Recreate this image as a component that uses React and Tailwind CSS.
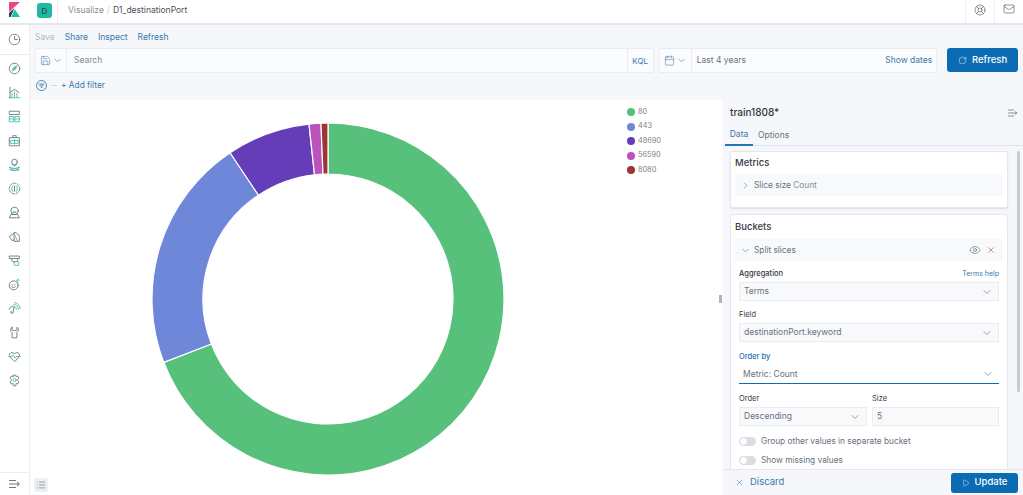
import React from "react";
import { ChevronDown, ChevronRight, X, Eye, Play, RotateCw, Calendar, Save, Mail, LifeBuoy, List } from "lucide-react";

const G = "#6f7682";
const T = "#4dbdad";
const Ico = ({ children }) => (
  <svg width="13" height="13" viewBox="0 0 16 16" fill="none" stroke={G} strokeWidth="1.1" strokeLinecap="round" strokeLinejoin="round">{children}</svg>
);
const icons = [
  <Ico><circle cx="8" cy="8" r="6.5" /><path d="M8 4v4h3.500" /></Ico>,
  <Ico><circle cx="8" cy="8" r="6.500" /><path d="M11 5 9 9 5 11 7 7z" stroke={T} fill={T} /></Ico>,
  <Ico><path d="M1.500 14.500h13" stroke={T} /><path d="M2.500 1.500v13" /><path d="M2.500 8 8 4l5.500 4" /><path d="M5 14V9M8 14V7M11 14V9" stroke={T} /></Ico>,
  <Ico><rect x="2" y="1.500" width="12" height="4" /><path d="M2 8h5v6.500H2zM9 8h5v6.500H9zM2 11h5M9 11h5" stroke={T} /></Ico>,
  <Ico><path d="M2 4.500h12v10H2zM6 4.500V2h4v2.500" /><path d="M3.500 8h9v3.500h-9z" stroke={T} /><path d="M8 7v5.500" stroke={T} /></Ico>,
  <Ico><circle cx="8" cy="5" r="3.500" /><path d="M8 10 5.500 7.500M8 10l2.500-2.500" /><path d="M2 11.500c3 2 9 2 12 0M2.500 14c3 1.500 8 1.500 11 0" stroke={T} strokeWidth="1.500" /></Ico>,
  <Ico><circle cx="8" cy="8" r="6.500" strokeDasharray="3 1.800" /><path d="M6 4.500c-2 2-2 5 0 7M10 4.500c2 2 2 5 0 7" stroke={T} /><path d="M8 5v6" /></Ico>,
  <Ico><circle cx="8" cy="6" r="4.500" /><path d="M2 14.500h12l-2-4H4z" /><path d="M6 7.500a2.500 2.500 0 0 1 4 0z" stroke={T} /></Ico>,
  <Ico><path d="M8 3a6.500 6.500 0 0 1 6 6.500V14H8z" /><path d="M7.500 4 1.500 8 5 13l3-1" /><path d="M8 6l4 8" stroke={T} /></Ico>,
  <Ico><path d="M2 2.500h12v3H2zM4 5.500l1.500 4H12V5.500" /><path d="M7 9.500 8 14h5l.5-4" stroke={T} /></Ico>,
  <Ico><circle cx="7" cy="9" r="5.500" /><path d="M5 8v.5M8.500 8v.5M4.500 11c1 .8 3.500 .8 4.500 0" /><path d="M12 6V1.500M10.500 3 12 1.500 13.500 3" stroke={T} /></Ico>,
  <Ico><path d="M1.500 9a4 4 0 0 1 6-3L6 14l-3-1 1-2" /><path d="M7 3a6 6 0 0 1 6 6M8 .8A8 8 0 0 1 15 8M7 5.500a3.500 3.500 0 0 1 3.500 3.500" stroke={T} /></Ico>,
  <Ico><path d="M5 1.500v3.500l3 1 3-1V1.500c2 1 2.500 4 1 5.500l-1 1v6.500H5V8L4 7C2.500 5.500 3 2.500 5 1.500z" /></Ico>,
  <Ico><path d="M8 14 2.500 8.500C0 5.500 3.500 1 8 4.500 12.500 1 16 5.500 13.500 8.500z" /><path d="M1 8h4l1.500-2 2 4L10 8h5" stroke={T} /></Ico>,
  <Ico><path d="M6.500 1.500h3l.5 2 2-.8 1.500 2.500-1.500 1.500v1.600l1.500 1.500L12 12.300l-2-.8-.5 3h-3l-.5-3-2 .8-1.500-2.500L4 8.300V6.700L2.500 5.200 4 2.700l2 .8z" /><circle cx="8" cy="7.500" r="2" stroke={T} /></Ico>,
];

const Link = ({ children, className = "" }) => <span className={"text-[#3a78ad] " + className}>{children}</span>;

const Select = ({ value, className = "", focus }) => (
  <div className={"h-[19px] flex items-center justify-between pl-[4px] pr-[5px] text-[8.500px] text-[#69707d] " + (focus ? "bg-white border-b border-[#0f6cb0] " : "bg-[#f8f9fb] border border-[#e9edf3] ") + className}>
    <span>{value}</span>
    <ChevronDown size={12} strokeWidth={1.2} color="#5a6270" />
  </div>
);

const Label = ({ children, className = "" }) => <div className={"text-[7.500px] font-medium h-[12px] leading-[12px] text-[#343741] " + className}>{children}</div>;

const Toggle = ({ label, className = "" }) => (
  <div className={"flex items-center gap-[5px] h-[12px] " + className}>
    <div className="w-[17px] h-[9px] rounded-full bg-[#d9dde4] flex items-center">
      <div className="w-[9px] h-[9px] rounded-full bg-white border border-[#d3d8e0]" />
    </div>
    <span className="text-[8.300px] text-[#69707d]">{label}</span>
  </div>
);

const arc = (a0, a1, R, r) => {
  const p = (a, q) => {
    const t = (a * Math.PI) / 180;
    return `${(176 + q * Math.sin(t)).toFixed(2)} ${(176 - q * Math.cos(t)).toFixed(2)}`;
  };
  const large = a1 - a0 > 180 ? 1 : 0;
  return `M${p(a0, R)}A${R} ${R} 0 ${large} 1 ${p(a1, R)}L${p(a1, r)}A${r} ${r} 0 ${large} 0 ${p(a0, r)}Z`;
};
const slices = [
  { name: "80", color: "#57c17b", a: [0, 248.9] },
  { name: "443", color: "#6f87d8", a: [248.9, 326.2] },
  { name: "48690", color: "#663db8", a: [326.2, 353.8] },
  { name: "56590", color: "#bc52bc", a: [353.8, 357.7] },
  { name: "8080", color: "#9e3533", a: [357.7, 360] },
];

export default function App() {
  return (
    <div className="w-[1023px] h-[495px] overflow-hidden bg-white flex flex-col text-[#343741]" style={{ fontFamily: "Inter, sans-serif" }}>
      <header className="h-[25px] shrink-0 flex border-b-2 border-[#e4e7ec] bg-white">
        <div className="w-[29px] flex items-start justify-center pt-[2px]">
          <svg width="11" height="15" viewBox="0 0 11 15">
            <path d="M0 0h11L0 10z" fill="#e8488b" />
            <path d="M0 15V11L5.500 6 1.500 15z" fill="#343741" />
            <path d="M5.800 7.200 11 15H2.200z" fill="#1fbfb0" />
          </svg>
        </div>
        <div className="w-[29px] flex items-start pt-[3px] pl-[8px] border-r border-[#eceff3]">
          <div className="w-[15px] h-[15px] rounded-[3px] bg-[#1fb8a6] text-[8px] font-medium flex items-center justify-center text-[#1b4d47]">D</div>
        </div>
        <div className="flex-1 pl-[10px] pt-[4px] text-[8.500px] flex gap-[3px] leading-[13px]">
          <span className="text-[#858b96]">Visualize</span>
          <span className="text-[#c9ced6]">/</span>
          <span className="text-[#4b505b]">D1_destinationPort</span>
        </div>
        <div className="w-[29px] h-[23px] border-l border-[#eceff3] flex items-start justify-center pt-[4px]">
          <LifeBuoy size={12} strokeWidth={1.2} color="#4b505b" />
        </div>
        <div className="w-[29px] h-[23px] border-l border-[#eceff3] flex items-start justify-center pt-[3px]">
          <Mail size={12} strokeWidth={1.2} color="#4b505b" />
        </div>
      </header>

      <div className="flex-1 flex min-h-0">
        <nav className="w-[30px] shrink-0 border-r border-[#eceef2] bg-white flex flex-col items-center">
          <div className="w-full h-[30px] border-b border-[#e9ebef] flex items-center justify-center shrink-0">{icons[0]}</div>
          <div className="flex flex-col items-center gap-[11px] pt-[7px]">
            {icons.slice(1).map((ic, i) => (
              <div key={i} className="h-[13px] flex items-center">{ic}</div>
            ))}
          </div>
          <div className="mt-auto w-full h-[23px] border-t border-[#eceef2] flex items-center justify-center">
            <svg width="12" height="10" viewBox="0 0 12 10" fill="none" stroke={G} strokeWidth="1"><path d="M0 1.500h7M0 5h10M0 8.500h7M8 3l2.500 2L8 7" /></svg>
          </div>
        </nav>

        <div className="flex-1 flex flex-col min-w-0">
          <section className="h-[75px] shrink-0 bg-[#f5f7fa] pl-[5px] pr-[5px]">
            <div className="h-[23px] pt-[1px] flex items-center gap-[10px] text-[8.500px]">
              <span className="text-[#b4bac4]">Save</span>
              <Link>Share</Link>
              <Link>Inspect</Link>
              <Link>Refresh</Link>
            </div>
            <div className="h-[25px] flex">
              <div className="w-[620px] h-[25px] flex bg-[#fbfcfd] border border-[#e9edf3] rounded-[2px]">
                <div className="w-[31px] border-r border-[#e9edf3] flex items-center justify-center gap-[1px]">
                  <Save size={11} strokeWidth={1.2} color="#3a78ad" />
                  <ChevronDown size={11} strokeWidth={1.3} color="#3a78ad" />
                </div>
                <div className="flex-1 pl-[7px] flex items-center text-[8.500px] text-[#858b96]">Search</div>
                <div className="w-[26px] border-l border-[#e9edf3] flex items-center justify-center text-[8px] text-[#3a78ad]">KQL</div>
              </div>
              <div className="w-[279px] h-[25px] ml-[5px] flex bg-[#fbfcfd] border border-[#e9edf3] rounded-[2px]">
                <div className="w-[32px] border-r border-[#e9edf3] flex items-center justify-center gap-[1px]">
                  <Calendar size={11} strokeWidth={1.2} color="#3a78ad" />
                  <ChevronDown size={11} strokeWidth={1.3} color="#3a78ad" />
                </div>
                <div className="flex-1 pl-[5px] pr-[4px] flex items-center justify-between text-[8.500px]">
                  <span className="text-[#69707d]">Last 4 years</span>
                  <Link>Show dates</Link>
                </div>
              </div>
              <div className="w-[71px] h-[24px] ml-[10px] bg-[#0b6cb3] rounded-[3px] flex items-center justify-center gap-[5px] text-white text-[9.500px] font-medium">
                <RotateCw size={9} strokeWidth={1.3} />
                Refresh
              </div>
            </div>
            <div className="h-[25px] flex items-center text-[8.300px]">
              <svg width="11" height="11" viewBox="0 0 11 11" fill="none" stroke="#3a78ad" strokeWidth="0.900" className="ml-[1px]"><circle cx="5.500" cy="5.500" r="5" /><path d="M2.500 4h6M3.500 5.800h4M4.800 7.500h1.500" /></svg>
              <span className="w-[6px] h-px bg-[#d3dae6] ml-[4px]" />
              <Link className="ml-[4px]">+ Add filter</Link>
            </div>
          </section>

          <div className="flex-1 flex min-h-0">
            <main className="w-[693px] shrink-0 bg-white flex relative">
              <svg width="352" height="352" viewBox="0 0 352 352" className="ml-[122px] mt-[23px] shrink-0">
                {slices.map((s) => (
                  <path key={s.name} d={arc(s.a[0], s.a[1], 176, 125)} fill={s.color} stroke="#fff" strokeWidth="1.200" />
                ))}
              </svg>
              <div className="ml-[123px] mt-[7px] flex flex-col gap-[4.500px]">
                {slices.map((s) => (
                  <div key={s.name} className="h-[10px] flex items-center gap-[3px] text-[7.300px] text-[#7d828c]">
                    <span className="w-[8px] h-[8px] rounded-full" style={{ background: s.color }} />
                    {s.name}
                  </div>
                ))}
              </div>
              <div className="absolute left-[689px] top-[195px] w-[3px] h-[8px] bg-[#aeb3bb]" />
              <div className="absolute left-[4px] bottom-[3px] w-[14px] h-[14px] rounded-[2px] bg-[#eceff3] flex items-center justify-center">
                <List size={10} strokeWidth={1.2} color="#4b505b" />
              </div>
            </main>

            <aside className="flex-1 bg-[#f5f7fa] flex flex-col min-w-0 relative">
              <div className="h-[25px] flex items-center justify-between pl-[7px] pr-[5px] shrink-0">
                <span className="text-[10px] font-medium text-[#343741]">train1808*</span>
                <svg width="10" height="8" viewBox="0 0 10 8" fill="none" stroke={G} strokeWidth="0.800"><path d="M0 1h6M0 4h8M0 7h6M7 2.500 9 4 7 5.500" /></svg>
              </div>
              <div className="h-[21px] shrink-0 border-b border-[#dfe3ea] flex text-[8.500px] pl-[2px]">
                <div className="w-[28px] h-[21px] border-b-2 border-[#1f77b4] text-[#3a78ad] flex items-center justify-center">Data</div>
                <div className="ml-[5px] h-[20px] flex items-center text-[#69707d]">Options</div>
              </div>

              <div className="flex-1 min-h-0 overflow-hidden flex pl-[7px] pt-[5px]">
                <div className="w-[278px] shrink-0">
                  <div className="h-[57px] bg-white rounded-[2px] border border-[#e4e8ee] shadow-[0_1px_2px_rgba(0,0,0,0.1)] px-[4px]">
                    <div className="h-[22px] flex items-center text-[9.500px] font-medium">Metrics</div>
                    <div className="h-[22px] bg-[#f8f9fb] flex items-center pl-[5px] gap-[3px] text-[8.300px] text-[#69707d]">
                      <ChevronRight size={11} strokeWidth={1.300} />
                      <span>Slice size <span className="text-[#858b96]">Count</span></span>
                    </div>
                  </div>
                  <div className="mt-[6px] h-[262px] bg-white rounded-[2px] border border-[#e4e8ee] px-[4px]">
                    <div className="h-[24px] pt-[1px] flex items-center text-[9.500px] font-medium">Buckets</div>
                    <div className="h-[22px] bg-[#f8f9fb] flex items-center pl-[5px] pr-[7px] gap-[3px] text-[8.300px] text-[#69707d]">
                      <ChevronDown size={11} strokeWidth={1.300} />
                      <span className="flex-1">Split slices</span>
                      <Eye size={12} strokeWidth={1.100} color="#4b505b" className="mr-[2px]" />
                      <X size={10} strokeWidth={1.500} color="#c4524a" />
                    </div>
                    <div className="px-[4px] pt-[7px]">
                      <div className="flex justify-between">
                        <Label>Aggregation</Label>
                        <span className="text-[7px] text-[#3a78ad] leading-[12px]">Terms help</span>
                      </div>
                      <Select value="Terms" className="mt-[2px]" />
                      <Label className="mt-[8px] font-normal">Field</Label>
                      <Select value="destinationPort.keyword" className="mt-[2px]" />
                      <Label className="mt-[9px] !text-[#1a73b5]">Order by</Label>
                      <Select value="Metric: Count" focus className="mt-[2px]" />
                      <div className="flex gap-[5px] mt-[9px]">
                        <div className="w-[128px]">
                          <Label className="font-normal">Order</Label>
                          <Select value="Descending" className="mt-[2px]" />
                        </div>
                        <div className="flex-1">
                          <Label className="font-normal">Size</Label>
                          <div className="mt-[2px] h-[19px] bg-[#f8f9fb] border border-[#e9edf3] flex items-center pl-[4px] text-[8.500px] text-[#69707d]">5</div>
                        </div>
                      </div>
                      <Toggle label="Group other values in separate bucket" className="mt-[9px]" />
                      <Toggle label="Show missing values" className="mt-[7px]" />
                    </div>
                  </div>
                </div>
                <div className="w-[3px] h-[241px] ml-[9px] bg-[#c6cad1] rounded-full shrink-0" />
              </div>

              <div className="h-[26px] shrink-0 bg-[#f5f7fa] border-t border-[#e4e8ee] flex items-center justify-between pl-[12px] pr-[5px]">
                <div className="flex items-center gap-[6px] text-[9.500px] text-[#3a78ad]">
                  <X size={9} strokeWidth={1.500} />
                  Discard
                </div>
                <div className="w-[67px] h-[20px] bg-[#0b6cb3] rounded-[3px] flex items-center justify-center gap-[5px] text-white text-[9.500px] font-medium">
                  <Play size={8} strokeWidth={1.300} />
                  Update
                </div>
              </div>
            </aside>
          </div>
        </div>
      </div>
    </div>
  );
}
